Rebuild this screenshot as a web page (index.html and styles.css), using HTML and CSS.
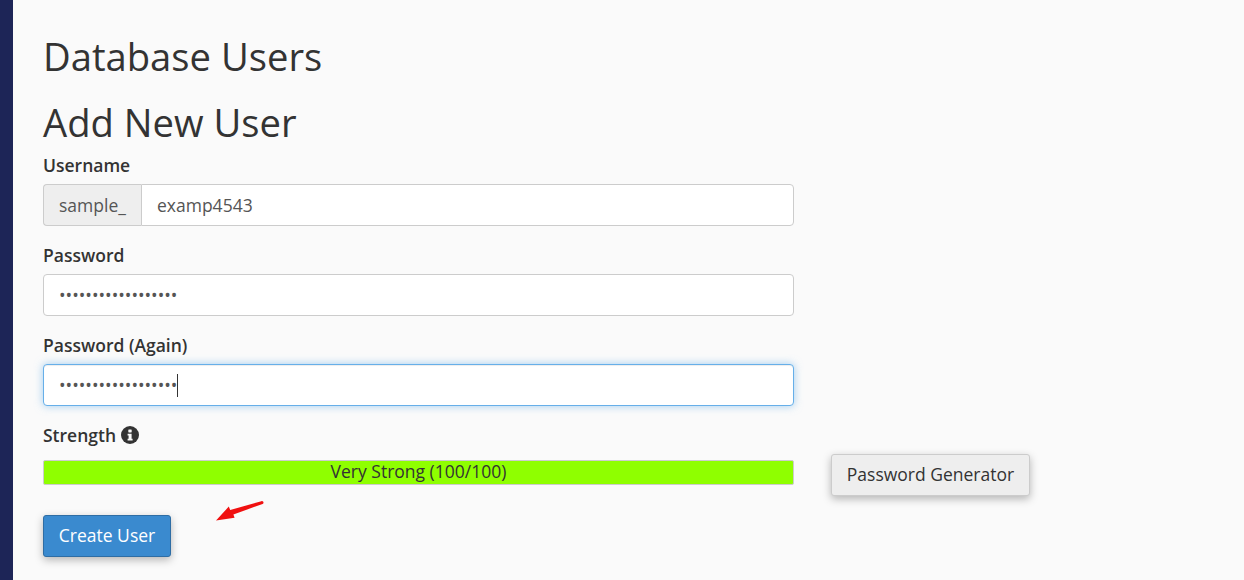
FILE: index.html
```html
<!DOCTYPE html>
<html lang="en">
<head>
  <meta charset="UTF-8" />
  <meta name="viewport" content="width=device-width, initial-scale=1.0" />
  <title>Database Users</title>
  <link rel="stylesheet" href="styles.css">
</head>
<body>
  <aside class="sidebar"></aside>

  <main class="content">
    <h1>Database Users</h1>
    <h2>Add New User</h2>

    <div class="form-group">
      <label>Username</label>
      <div class="input-group">
        <span class="addon">sample_</span>
        <div class="field field-joined">examp4543</div>
      </div>
    </div>

    <div class="form-group">
      <label>Password</label>
      <div class="field dots">••••••••••••••••••</div>
    </div>

    <div class="form-group">
      <label>Password (Again)</label>
      <div class="field dots focused">••••••••••••••••••<span class="caret"></span></div>
    </div>

    <div class="strength-label">
      <label>Strength</label>
      <svg class="info-icon" viewBox="0 0 18 18" width="18" height="18">
        <circle cx="9" cy="9" r="9" fill="#333"/>
        <rect x="7.3" y="3.4" width="3.4" height="3" rx="0.6" fill="#fafafa"/>
        <path d="M6.6 7.700h4v5.100h1v1.800H6.600v-1.800h1v-3.300h-1z" fill="#fafafa"/>
      </svg>
    </div>

    <div class="strength-row">
      <div class="meter">Very Strong (100/100)</div>
      <button class="btn btn-default">Password Generator</button>
    </div>

    <div class="submit-row">
      <button class="btn btn-primary">Create User</button>
      <svg class="arrow" viewBox="0 0 48 20" width="48" height="20">
        <path d="M46.600 3 17.400 13.400l1.200 3.400L0 19.400 12.800 5.600l1.400 3.400L45.400.2c1.900-.6 3 2.100 1.200 2.800z" fill="#f01010"/>
      </svg>
    </div>
  </main>
</body>
</html>
```

FILE: styles.css
```css
* {
  box-sizing: border-box;
}
html, body {
  height: 100%;
}
body {
  margin: 0;
  display: flex;
  overflow: hidden;
  font-family: "Open Sans", sans-serif;
  font-size: 17.5px;
  background: #fafafa;
  color: #333;
}
.sidebar {
  width: 13px;
  flex-shrink: 0;
  background: #1d2557;
}
.content {
  flex: 1;
  padding: 31px 30px 0;
}
h1, h2 {
  margin: 0;
  font-size: 38.2px;
  font-weight: 400;
  line-height: 50px;
}
h2 {
  margin-top: 16px;
  margin-bottom: 7px;
}
label {
  display: block;
  font-weight: 600;
  line-height: 22px;
}
.form-group {
  width: 751px;
  margin-bottom: 18px;
}
.form-group label {
  margin-bottom: 8px;
}
.input-group {
  display: flex;
}
.addon {
  width: 98px;
  height: 42px;
  padding: 0 15px;
  line-height: 40px;
  color: #555;
  background: #eee;
  border: 1px solid #ccc;
  border-right: 0;
  border-radius: 4px 0 0 4px;
}
.field {
  height: 42px;
  padding: 0 15px;
  line-height: 40px;
  color: #555;
  background: #fff;
  border: 1px solid #ccc;
  border-radius: 4px;
}
.field-joined {
  flex: 1;
  border-radius: 0 4px 4px 0;
}
.dots {
  display: flex;
  align-items: center;
}
.focused {
  border-color: #66afe9;
  box-shadow: inset 0 1px 1px rgba(0,0,0,.075), 0 0 8px rgba(102,175,233,.6);
}
.caret {
  width: 1px;
  height: 23px;
  background: #333;
}
.strength-label {
  display: flex;
  align-items: center;
  gap: 5px;
  margin-top: 1px;
}
.strength-row {
  display: flex;
  align-items: flex-start;
  gap: 37px;
  margin-top: 8px;
}
.meter {
  width: 751px;
  height: 25px;
  margin-top: 6px;
  line-height: 21px;
  text-align: center;
  background: #8fff00;
  border: 1px solid #ccc;
  border-radius: 2px;
}
.btn {
  height: 42px;
  padding: 0 10px 2px;
  font-family: inherit;
  font-size: 17.5px;
  white-space: nowrap;
  border: 1px solid #ccc;
  border-radius: 3px;
  box-shadow: 0 3px 8px rgba(0,0,0,.28);
}
.btn-default {
  width: 199px;
  color: #333;
  background: #eee;
}
.btn-primary {
  width: 128px;
  color: #fff;
  background: #3a8acf;
  border-color: #2e6da4;
}
.submit-row {
  position: relative;
  margin-top: 19px;
}
.arrow {
  position: absolute;
  left: 173px;
  top: -14px;
}
```
